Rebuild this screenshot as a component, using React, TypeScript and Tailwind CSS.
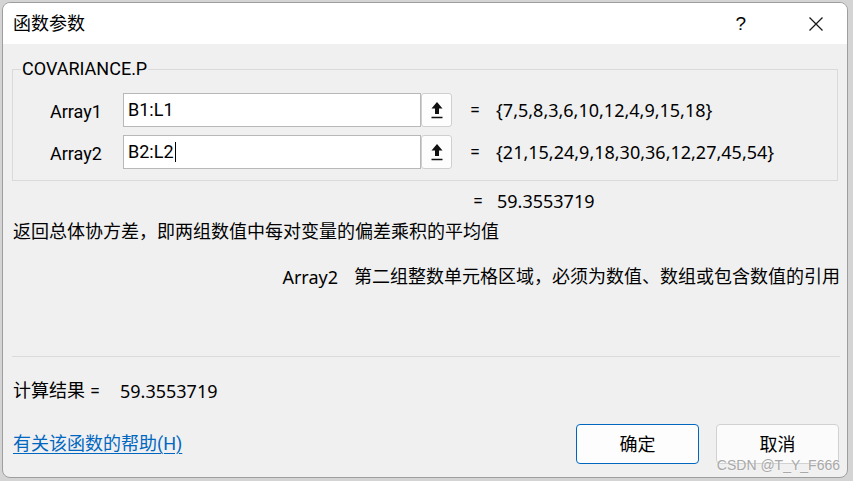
export default function App() {
  return (
    <div className="w-[853px] h-[481px] bg-[#d4d4d4] pl-[2px] pt-[2px] overflow-hidden font-[Roboto,'Noto_Sans_CJK_SC',sans-serif] text-[18px] text-black">
      <div className="relative w-[846px] h-[476px] rounded-[8px] border border-[#9e9e9e] bg-[#f0f0f0] overflow-hidden flex flex-col">
        <div className="h-[41px] bg-white flex items-center pl-[10px] shrink-0">
          <span className="leading-[24px]">函数参数</span>
          <span className="ml-auto mr-[62px] text-[19px] leading-[24px] font-['Liberation_Sans',sans-serif] font-light">?</span>
          <svg width="16" height="16" viewBox="0 0 16 16" className="mr-[23px]">
            <path d="M1.5 1.5 L14.5 14.5 M14.5 1.5 L1.5 14.5" stroke="#1a1a1a" strokeWidth="1.3" fill="none" />
          </svg>
        </div>
        <div className="flex-1 flex flex-col px-[9px]">
          <fieldset className="mt-[14px] border border-[#dadada] pt-[13px] pb-[11px]">
            <legend className="ml-[8px] px-[1px] leading-[22px]">COVARIANCE.P</legend>
            <div className="flex flex-col gap-[8px] pl-[37px]">
              <Row label="Array1" value="B1:L1" result="{7,5,8,3,6,10,12,4,9,15,18}" />
              <Row label="Array2" value="B2:L2" result="{21,15,24,9,18,30,36,12,27,45,54}" caret />
            </div>
          </fieldset>
          <div className="mt-[8px] flex leading-[24px]">
            <span className="w-[461px]" />
            <span className="w-[24px]">=</span>
            <span className="font-['Noto_Sans',sans-serif] text-[18px]">59.3553719</span>
          </div>
          <div className="mt-[7px] pl-[1px] leading-[24px]">返回总体协方差，即两组数值中每对变量的偏差乘积的平均值</div>
          <div className="mt-[21px] flex justify-end mr-[-2px] leading-[24px]">
            <span className="mr-[16px] font-['Noto_Sans',sans-serif]">Array2</span>
            <span>第二组整数单元格区域，必须为数值、数组或包含数值的引用</span>
          </div>
          <div className="mt-[67px] h-px bg-[#dadada] mr-[-2px]" />
          <div className="mt-[22px] flex pl-[1px] leading-[24px]">
            <span>计算结果</span>
            <span className="ml-[5px] w-[30px]">=</span>
            <span className="font-['Noto_Sans',sans-serif]">59.3553719</span>
          </div>
          <div className="mt-[21px] flex items-center mr-[-1px]">
            <a className="pl-[1px] text-[#0067c0] underline underline-offset-[3px] decoration-1 leading-[24px]">有关该函数的帮助(H)</a>
            <button className="ml-auto w-[123px] h-[40px] rounded-[4px] border border-[#0067c0] bg-[#fdfdfd] text-[18px]">确定</button>
            <button className="ml-[17px] w-[123px] h-[40px] rounded-[4px] border border-[#d1d1d1] bg-[#fbfbfb] text-[18px]">取消</button>
          </div>
        </div>
        <div className="absolute right-[7px] bottom-[3px] text-[14px] leading-[18px] text-[#a8a8a8] font-['Liberation_Sans',sans-serif] [text-shadow:0_0_2px_#ffffff]">
          CSDN @T_Y_F666
        </div>
      </div>
    </div>
  );
}

function Row({ label, value, result, caret }: { label: string; value: string; result: string; caret?: boolean }) {
  return (
    <div className="flex items-center h-[34px]">
      <span className="w-[73px] leading-[24px] translate-y-[2px]">{label}</span>
      <div className="w-[298px] h-[34px] border border-[#b8b8b8] bg-white pl-[4px] flex items-center">
        <span className="leading-[24px]">{value}</span>
        {caret && <span className="ml-[1px] w-px h-[20px] bg-black" />}
      </div>
      <div className="w-[31px] h-[34px] border border-[#cfcfcf] rounded-[3px] bg-[#fdfdfd] flex items-center justify-center">
        <svg width="12" height="18" viewBox="0 0 12 18">
          <path d="M6 1 L11.5 7.5 L8 7.5 L8 13 L4 13 L4 7.5 L0.5 7.5 Z" fill="#111" />
          <path d="M0.5 16.5 L11.5 16.5" stroke="#111" strokeWidth="1.3" />
        </svg>
      </div>
      <span className="ml-[18px] w-[26px] leading-[24px]">=</span>
      <span className="leading-[24px] font-['Noto_Sans',sans-serif] text-[18px]">{result}</span>
    </div>
  );
}
